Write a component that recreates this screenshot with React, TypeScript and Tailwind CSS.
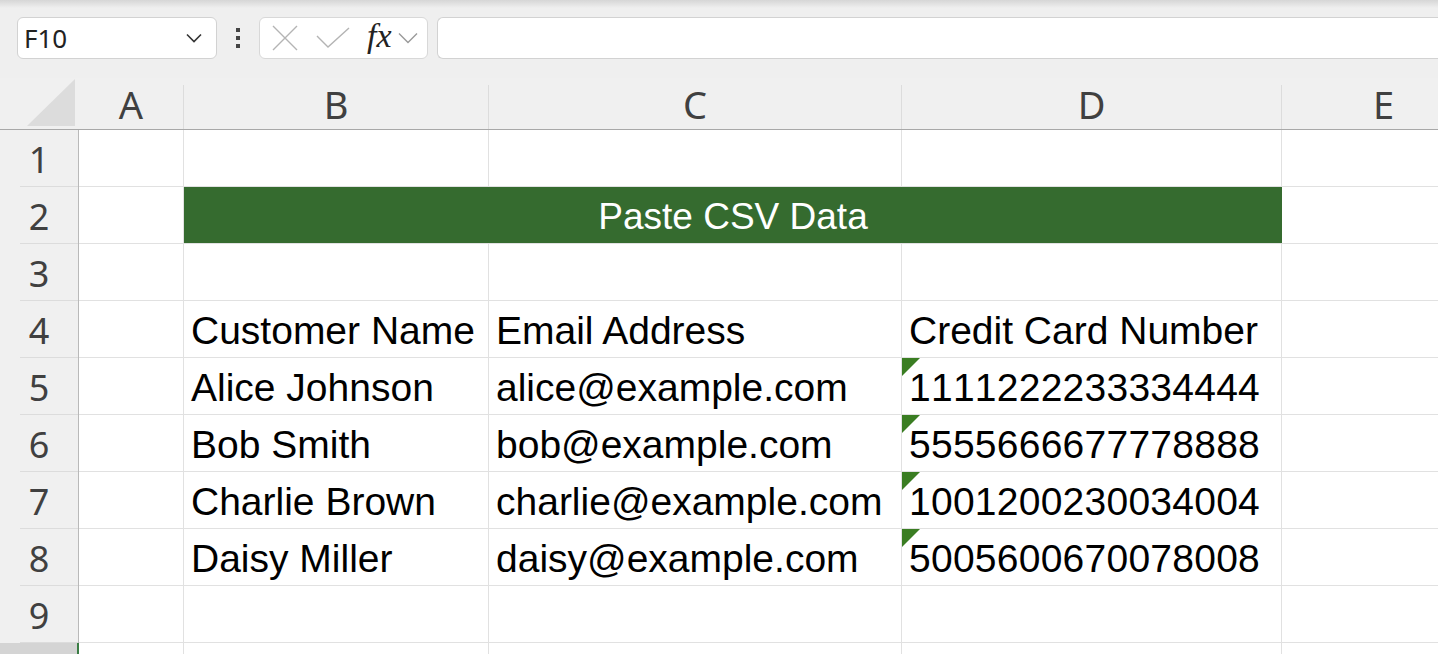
import React from "react";

const cols = [
  { key: "A", w: "w-[105px]" },
  { key: "B", w: "w-[305px]" },
  { key: "C", w: "w-[413px]" },
  { key: "D", w: "w-[380px]" },
];

type Row = { n: number; cells: string[]; flagD?: boolean; title?: boolean };

const rows: Row[] = [
  { n: 1, cells: ["", "", "", ""] },
  { n: 2, cells: [], title: true },
  { n: 3, cells: ["", "", "", ""] },
  { n: 4, cells: ["", "Customer Name", "Email Address", "Credit Card Number"] },
  { n: 5, cells: ["", "Alice Johnson", "alice@example.com", "1111222233334444"], flagD: true },
  { n: 6, cells: ["", "Bob Smith", "bob@example.com", "5555666677778888"], flagD: true },
  { n: 7, cells: ["", "Charlie Brown", "charlie@example.com", "1001200230034004"], flagD: true },
  { n: 8, cells: ["", "Daisy Miller", "daisy@example.com", "5005600670078008"], flagD: true },
  { n: 9, cells: ["", "", "", ""] },
];

function RowHeader({ n }: { n: number }) {
  return (
    <div className="w-[79px] shrink-0 flex flex-col bg-[#f0f0f0] border-r border-[#b9b9b9]">
      <div className="flex-1 flex items-center justify-center pt-[3px] text-[36px] leading-none text-[#404040] font-['Noto_Sans',sans-serif]">
        {n}
      </div>
      <div className="h-px ml-[20px] bg-[#dcdcdc]" />
    </div>
  );
}

function Cell({ w, text, flag }: { w: string; text: string; flag?: boolean }) {
  return (
    <div
      className={`${w} shrink-0 relative flex items-center pl-[7px] pt-[3px] border-r border-b border-[#e1e1e1] bg-white whitespace-nowrap text-[39px] leading-[39px] text-black ${flag ? "tracking-[0.25px] [font-kerning:none]" : ""}`}
    >
      {flag && (
        <svg className="absolute left-0 top-0" width="18" height="18" viewBox="0 0 18 18">
          <polygon points="0,0 18,0 0,18" fill="#3a7d22" />
        </svg>
      )}
      {text}
    </div>
  );
}

export default function App() {
  return (
    <div className="w-[1438px] h-[654px] overflow-hidden bg-[#efefef] font-['Liberation_Sans',Arial,sans-serif] flex flex-col">
      {/* toolbar shadow */}
      <div className="h-[8px] bg-gradient-to-b from-[#d6d6d6] to-[#efefef]" />

      {/* formula bar */}
      <div className="h-[70px] flex items-start pt-[9px] pl-[17px]">
        <div className="w-[200px] h-[42px] rounded-[6px] bg-white border border-[#d2d2d2] flex items-center justify-between pl-[6px] pr-[14px]">
          <span className="text-[26px] leading-none text-[#222] font-['Noto_Sans',sans-serif]">F10</span>
          <svg width="16" height="10" viewBox="0 0 16 10">
            <path d="M1 1.5 L8 8.5 L15 1.5" fill="none" stroke="#333" strokeWidth="1.6" />
          </svg>
        </div>
        <div className="w-[42px] h-[42px] flex flex-col items-center justify-center gap-[4px]">
          <div className="w-[4px] h-[4px] bg-[#444]" />
          <div className="w-[4px] h-[4px] bg-[#444]" />
          <div className="w-[4px] h-[4px] bg-[#444]" />
        </div>
        <div className="w-[169px] h-[42px] rounded-[6px] bg-white border border-[#d8d8d8] flex items-center pl-[12px]">
          <svg width="26" height="26" viewBox="0 0 26 26">
            <path d="M1 1 L25 25 M25 1 L1 25" stroke="#b4b4b4" strokeWidth="1.4" />
          </svg>
          <svg className="ml-[18px]" width="34" height="22" viewBox="0 0 34 22">
            <path d="M1 9 L12 20 L33 1" fill="none" stroke="#b4b4b4" strokeWidth="1.4" />
          </svg>
          <span className="ml-[17px] text-[34px] leading-none italic text-[#222] font-['Liberation_Serif',serif] -mt-[5px]">fx</span>
          <svg className="ml-[6px]" width="20" height="12" viewBox="0 0 20 12">
            <path d="M1 1.5 L10 10.5 L19 1.5" fill="none" stroke="#9a9a9a" strokeWidth="1.4" />
          </svg>
        </div>
        <div className="flex-1 ml-[9px] h-[42px] rounded-l-[6px] bg-white border border-r-0 border-[#d2d2d2]" />
      </div>

      {/* column header */}
      <div className="h-[52px] flex bg-[#f0f0f0] border-b border-[#a8a8a8]">
        <div className="w-[79px] shrink-0 flex items-end justify-end pr-[4px] pb-[3px]">
          <svg width="48" height="47" viewBox="0 0 48 47">
            <polygon points="48,0 48,47 0,47" fill="#dcdcdc" />
          </svg>
        </div>
        {cols.map((c) => (
          <div
            key={c.key}
            className={`${c.w} shrink-0 self-end h-[44px] flex items-start justify-center border-r border-[#dcdcdc] text-[38px] leading-[38px] text-[#404040] font-['Noto_Sans',sans-serif]`}
          >
            {c.key}
          </div>
        ))}
        <div className="flex-1 self-end h-[44px] flex items-start pl-[91px] text-[38px] leading-[38px] text-[#404040] font-['Noto_Sans',sans-serif]">
          E
        </div>
      </div>

      {/* rows */}
      {rows.map((r) => (
        <div key={r.n} className="h-[57px] flex shrink-0">
          <RowHeader n={r.n} />
          {r.title ? (
            <>
              <Cell w="w-[105px]" text="" />
              <div className="w-[1098px] shrink-0 flex items-center justify-center bg-[#356b2f] text-white text-[37px] leading-[37px] pt-[2px] border-b border-[#e1e1e1]">
                Paste CSV Data
              </div>
            </>
          ) : (
            cols.map((c, i) => (
              <Cell key={c.key} w={c.w} text={r.cells[i]} flag={r.flagD && i === 3} />
            ))
          )}
          <div className="flex-1 bg-white border-b border-[#e1e1e1]" />
        </div>
      ))}

      {/* row 10 (selected) */}
      <div className="flex-1 flex">
        <div className="w-[79px] shrink-0 bg-[#d4d4d4] border-r-2 border-[#3a7d44]" />
        {cols.map((c) => (
          <div key={c.key} className={`${c.w} shrink-0 bg-white border-r border-[#e1e1e1]`} />
        ))}
        <div className="flex-1 bg-white" />
      </div>
    </div>
  );
}
